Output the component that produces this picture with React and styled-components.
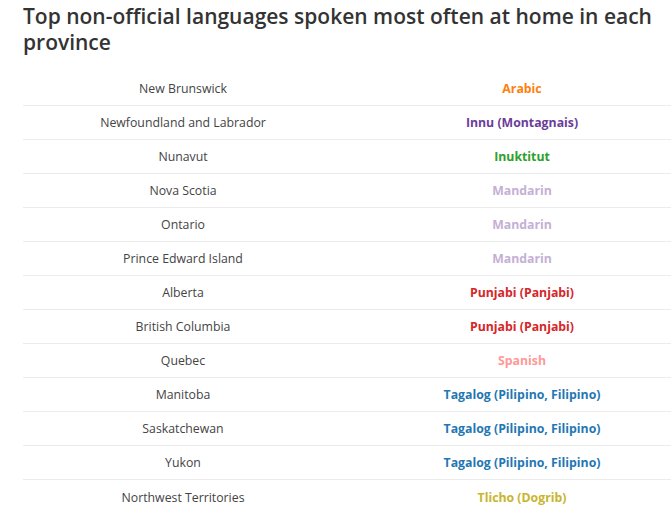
import React from "react";
import styled, { createGlobalStyle } from "styled-components";

const GlobalStyle = createGlobalStyle`
  html, body {
    margin: 0;
    padding: 0;
    background: #ffffff;
    overflow: hidden;
  }
  body {
    font-family: "Open Sans", "Noto Sans", sans-serif;
    color: #333333;
  }
`;

const Page = styled.div`
  width: 671px;
  height: 517px;
  padding: 3px 0 0 23px;
  box-sizing: border-box;
  overflow: hidden;
`;

const Title = styled.h1`
  margin: 0;
  font-size: 21px;
  font-weight: 600;
  line-height: 26px;
  color: #333333;
  width: 645px;
`;

const Table = styled.div`
  display: grid;
  grid-template-columns: 320px 358px;
  margin-top: 17px;
`;

const Cell = styled.div`
  height: 34px;
  display: flex;
  align-items: center;
  justify-content: center;
  font-size: 12.3px;
  border-bottom: ${(p) => (p.$last ? "none" : "1px solid #ececec")};
  box-sizing: border-box;
`;

const Province = styled(Cell)`
  color: #444444;
`;

const Language = styled(Cell)`
  color: ${(p) => p.$color};
  font-weight: 700;
`;

const rows = [
  ["New Brunswick", "Arabic", "#ff7f0e"],
  ["Newfoundland and Labrador", "Innu (Montagnais)", "#6a3d9a"],
  ["Nunavut", "Inuktitut", "#2ca02c"],
  ["Nova Scotia", "Mandarin", "#c5b0d5"],
  ["Ontario", "Mandarin", "#c5b0d5"],
  ["Prince Edward Island", "Mandarin", "#c5b0d5"],
  ["Alberta", "Punjabi (Panjabi)", "#d62728"],
  ["British Columbia", "Punjabi (Panjabi)", "#d62728"],
  ["Quebec", "Spanish", "#ff9896"],
  ["Manitoba", "Tagalog (Pilipino, Filipino)", "#1f77b4"],
  ["Saskatchewan", "Tagalog (Pilipino, Filipino)", "#1f77b4"],
  ["Yukon", "Tagalog (Pilipino, Filipino)", "#1f77b4"],
  ["Northwest Territories", "Tlicho (Dogrib)", "#c9b52e"],
];

export default function App() {
  return (
    <>
      <GlobalStyle />
      <Page>
        <Title>
          Top non-official languages spoken most often at home in each
          province
        </Title>
        <Table>
          {rows.map(([prov, lang, color], i) => {
            const last = i === rows.length - 1;
            return (
              <React.Fragment key={prov}>
                <Province $last={last}>{prov}</Province>
                <Language $last={last} $color={color}>
                  {lang}
                </Language>
              </React.Fragment>
            );
          })}
        </Table>
      </Page>
    </>
  );
}
